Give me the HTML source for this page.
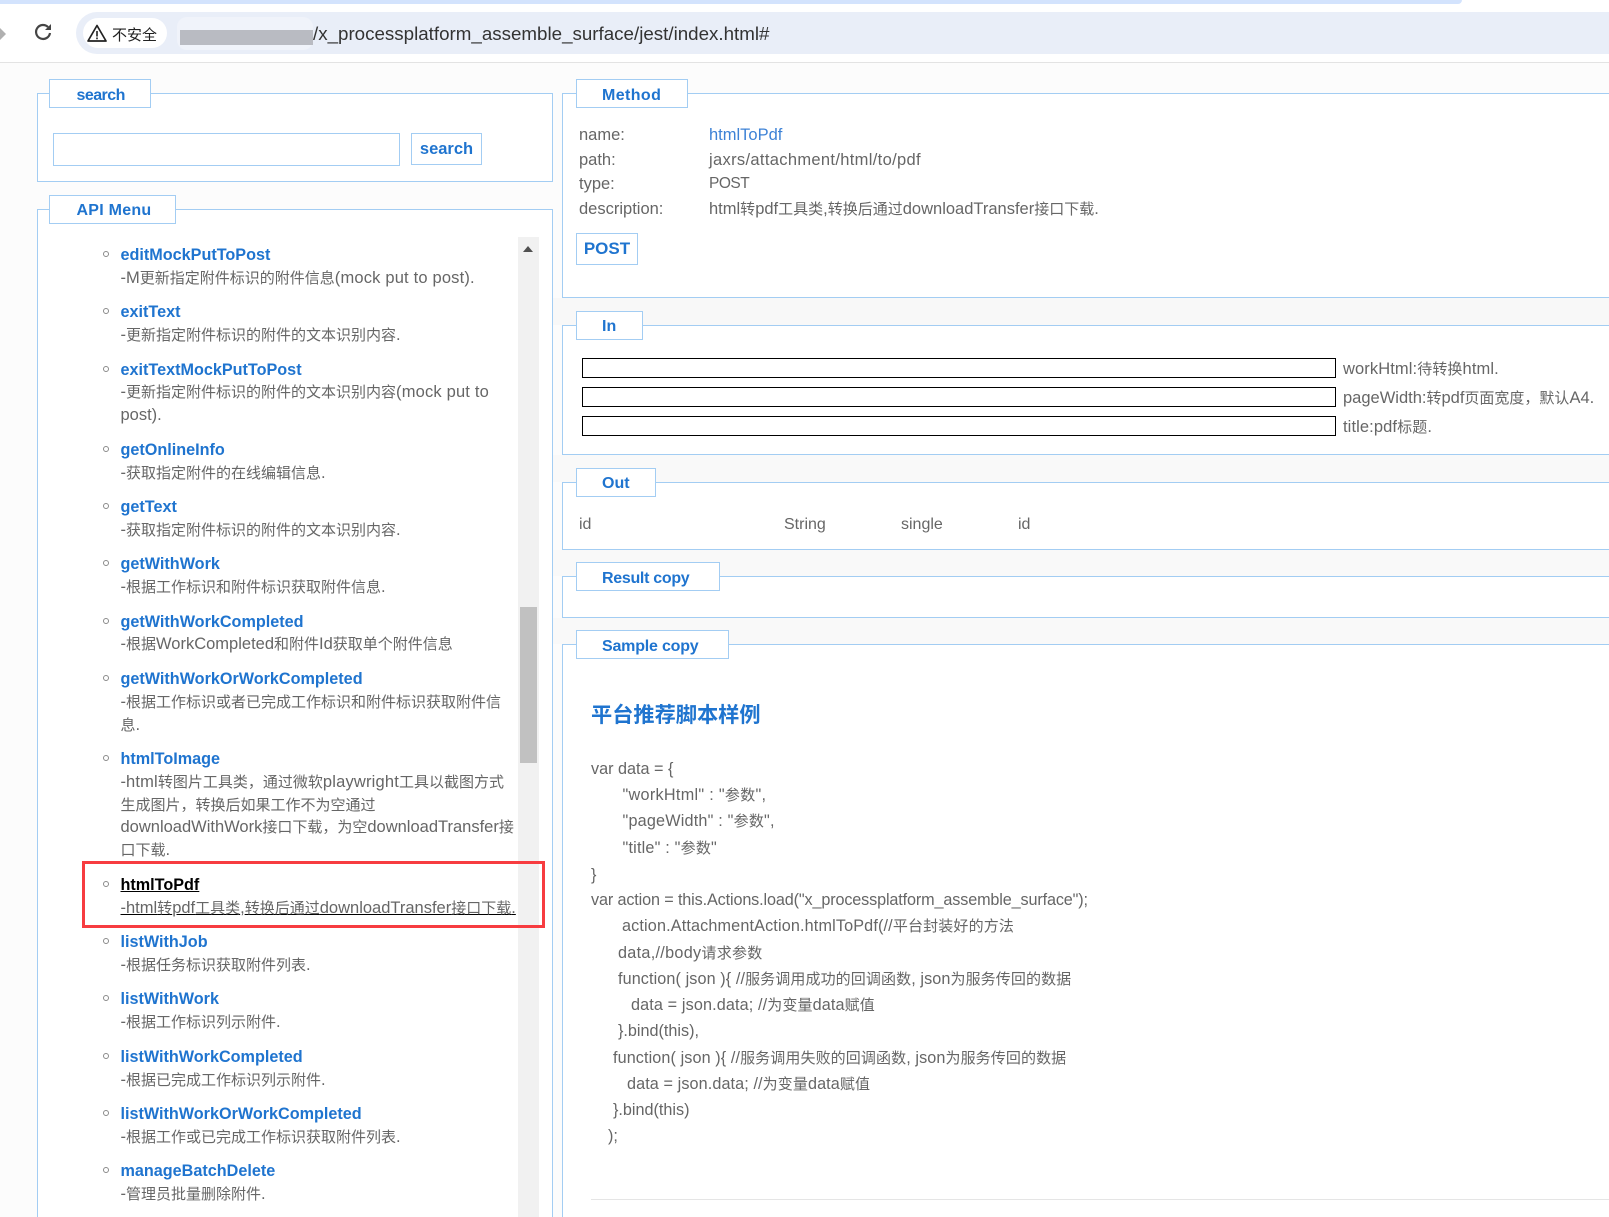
<!DOCTYPE html>
<html><head><meta charset="utf-8">
<style>
html,body{margin:0;padding:0;width:1609px;height:1217px;overflow:hidden;background:#fff}
body{position:relative;font-family:"Liberation Sans","Noto Sans CJK SC",sans-serif;font-size:16.5px;color:#666}
.a{position:absolute;box-sizing:border-box}
.t{position:absolute;white-space:nowrap;line-height:20px;height:20px}
i{font-style:normal;font-size:15px;line-height:0;font-family:"Noto Sans CJK SC",sans-serif}
u{text-decoration:none;letter-spacing:.18px}
.fs{position:absolute;box-sizing:border-box;border:1px solid #a3cdf3;background:#fff}
.lg{position:absolute;box-sizing:border-box;border:1px solid #a3cdf3;background:#fff;color:#1f74cf;font-weight:bold;font-size:16px;line-height:31px;padding-left:25px;white-space:nowrap}
.inp{position:absolute;box-sizing:border-box;left:582px;width:754px;height:20px;border:1px solid #000;background:#fff}
.btn{position:absolute;box-sizing:border-box;border:1px solid #a3cdf3;background:#fff;color:#1f74cf;font-weight:bold;font-size:17px;text-align:center;white-space:nowrap}
ul{position:absolute;left:120.5px;top:244px;width:400px;margin:0;padding:0;list-style:none}
li{position:relative;line-height:22.8px;margin-bottom:11.72px;white-space:nowrap;font-size:16.5px;color:#666}
li b{color:#1f74cf;display:block;font-size:16.2px}
li:before{content:"";position:absolute;left:-17.5px;top:7px;width:6px;height:6px;box-sizing:border-box;border:1.3px solid #8a8a8a;border-radius:50%}
li.s b{color:#000;text-decoration:underline}
li.s span{text-decoration:underline;text-decoration-color:#000}
.c{font-size:16.2px;color:#666}
</style></head><body>
<!-- browser chrome -->
<div class="a" style="left:0;top:0;width:1462px;height:4px;background:#d3e3fd;border-radius:0 0 8px 0"></div>
<div class="a" style="left:76px;top:12px;width:1533px;height:42px;background:#e9eef8;border-radius:21px 0 0 21px"></div>
<div class="a" style="left:83px;top:18px;width:84px;height:30px;background:#fff;border-radius:15px"></div>
<div class="a" style="left:177px;top:17px;width:136px;height:33px;background:#f0f3fa;border-radius:10px"></div>
<div class="a" style="left:180px;top:30px;width:133px;height:15px;background:#b9bbc2"></div>
<div class="a" style="left:0;top:62px;width:1609px;height:1px;background:#e3e3e3"></div>
<svg class="a" style="left:0;top:26px" width="8" height="16" viewBox="0 0 8 16"><path d="M0 2L6 8L0 14" fill="#b0b0b0"/></svg>
<svg class="a" style="left:34px;top:22px" width="20" height="20" viewBox="0 0 20 20"><path d="M16 11a7 7 0 1 1-2-6" fill="none" stroke="#454545" stroke-width="2.2"/><path d="M17 2v6h-6z" fill="#454545"/></svg>
<svg class="a" style="left:87px;top:24px" width="20" height="18" viewBox="0 0 20 18"><path d="M10 1.5L19 17H1z" fill="none" stroke="#222" stroke-width="1.7" stroke-linejoin="round"/><path d="M10 7v5.5M10 13.5v1.7" stroke="#222" stroke-width="1.6"/></svg>
<div class="t" style="left:112px;top:25px;font-size:15px;color:#222;font-family:'Noto Sans CJK SC',sans-serif">不安全</div>
<div class="t" style="left:313px;top:24px;font-size:18.75px;color:#333">/x_processplatform_assemble_surface/jest/index.html#</div>

<div class="a" style="left:0;top:63px;width:1609px;height:1154px;background:#fcfcfc"></div>
<div class="a" style="left:553px;top:298px;width:1056px;height:27px;background:#f8f8f8"></div>
<div class="a" style="left:553px;top:455px;width:1056px;height:27px;background:#f9f9f9"></div>
<div class="a" style="left:553px;top:550px;width:1056px;height:26px;background:#f9f9f9"></div>
<div class="a" style="left:553px;top:618px;width:1056px;height:26px;background:#f9f9f9"></div>

<!-- left: search -->
<div class="fs" style="left:37px;top:93px;width:516px;height:89px"></div>
<div class="lg" style="left:49px;top:79px;width:102px;height:29px;padding-left:26.5px;letter-spacing:-.55px">search</div>
<div class="a" style="left:53px;top:133px;width:347px;height:33px;border:1px solid #a3cdf3;background:#fff"></div>
<div class="btn" style="left:411px;top:133px;width:71px;height:32px;line-height:31px;font-size:16.5px">search</div>

<!-- left: API menu -->
<div class="fs" style="left:37px;top:209px;width:516px;height:1030px"></div>
<div class="lg" style="left:49px;top:195px;width:127px;height:29px;padding-left:26.5px;letter-spacing:.25px;line-height:29px">API Menu</div>
<ul>
<li><b>editMockPutToPost</b><span>-M<i>更新指定附件标识的附件信息</i><u>(mock put to post).</u></span></li>
<li><b>exitText</b><span>-<i>更新指定附件标识的附件的文本识别内容</i>.</span></li>
<li><b>exitTextMockPutToPost</b><span>-<i>更新指定附件标识的附件的文本识别内容</i><u>(mock put to</u><br>post).</span></li>
<li><b>getOnlineInfo</b><span>-<i>获取指定附件的在线编辑信息</i>.</span></li>
<li><b>getText</b><span>-<i>获取指定附件标识的附件的文本识别内容</i>.</span></li>
<li><b>getWithWork</b><span>-<i>根据工作标识和附件标识获取附件信息</i>.</span></li>
<li><b>getWithWorkCompleted</b><span>-<i>根据</i>WorkCompleted<i>和附件</i>Id<i>获取单个附件信息</i></span></li>
<li><b>getWithWorkOrWorkCompleted</b><span>-<i>根据工作标识或者已完成工作标识和附件标识获取附件信</i><br><i>息</i>.</span></li>
<li><b>htmlToImage</b><span>-<u>html</u><i>转图片工具类，通过微软</i><u>playwright</u><i>工具以截图方式</i><br><i>生成图片，转换后如果工作不为空通过</i><br>downloadWithWork<i>接口下载，为空</i>downloadTransfer<i>接</i><br><i>口下载</i>.</span></li>
<li class="s"><b>htmlToPdf</b><span>-html<i>转</i>pdf<i>工具类</i>,<i>转换后通过</i>downloadTransfer<i>接口下载</i>.</span></li>
<li><b>listWithJob</b><span>-<i>根据任务标识获取附件列表</i>.</span></li>
<li><b>listWithWork</b><span>-<i>根据工作标识列示附件</i>.</span></li>
<li><b>listWithWorkCompleted</b><span>-<i>根据已完成工作标识列示附件</i>.</span></li>
<li><b>listWithWorkOrWorkCompleted</b><span>-<i>根据工作或已完成工作标识获取附件列表</i>.</span></li>
<li><b>manageBatchDelete</b><span>-<i>管理员批量删除附件</i>.</span></li>
</ul>
<div class="a" style="left:518px;top:237px;width:21px;height:980px;background:#f1f1f1"></div>
<div class="a" style="left:520px;top:607px;width:17px;height:156px;background:#c1c1c1"></div>
<svg class="a" style="left:523px;top:246px" width="10" height="6" viewBox="0 0 10 6"><path d="M5 0L10 6H0z" fill="#505050"/></svg>
<div class="a" style="left:82px;top:861px;width:463px;height:67px;border:3px solid #f73c40"></div>

<!-- right: Method -->
<div class="fs" style="left:562px;top:93px;width:1060px;height:205px"></div>
<div class="lg" style="left:576px;top:79px;width:112px;height:29px;letter-spacing:.4px">Method</div>
<div class="t" style="left:579px;top:125px">name:</div><div class="t" style="left:709px;top:125px;color:#3d82d6">htmlToPdf</div>
<div class="t" style="left:579px;top:150px">path:</div><div class="t" style="left:709px;top:150px;letter-spacing:.33px">jaxrs/attachment/html/to/pdf</div>
<div class="t" style="left:579px;top:174px">type:</div><div class="t" style="left:709px;top:174px;font-size:15.5px;letter-spacing:-.5px">POST</div>
<div class="t" style="left:579px;top:199px">description:</div><div class="t" style="left:709px;top:199px">html<i>转</i>pdf<i>工具类</i>,<i>转换后通过</i>downloadTransfer<i>接口下载</i>.</div>
<div class="btn" style="left:576px;top:233px;width:62px;height:32px;line-height:29px">POST</div>

<!-- In -->
<div class="fs" style="left:562px;top:325px;width:1060px;height:130px"></div>
<div class="lg" style="left:576px;top:311px;width:67px;height:29px;line-height:29px">In</div>
<div class="inp" style="top:358px"></div><div class="t" style="left:1343px;top:359px;letter-spacing:.1px">workHtml:<i>待转换</i>html.</div>
<div class="inp" style="top:387px"></div><div class="t" style="left:1343px;top:388px">pageWidth:<i>转</i>pdf<i>页面宽度，默认</i>A4.</div>
<div class="inp" style="top:416px"></div><div class="t" style="left:1343px;top:417px;letter-spacing:.1px">title:pdf<i>标题</i>.</div>

<!-- Out -->
<div class="fs" style="left:562px;top:482px;width:1060px;height:68px"></div>
<div class="lg" style="left:576px;top:468px;width:80px;height:29px;line-height:29px">Out</div>
<div class="t" style="left:579px;top:515px;font-size:16px">id</div><div class="t" style="left:784px;top:515px;font-size:16px">String</div><div class="t" style="left:901px;top:515px;font-size:16px">single</div><div class="t" style="left:1018px;top:515px;font-size:16px">id</div>

<!-- Result -->
<div class="fs" style="left:562px;top:576px;width:1060px;height:42px"></div>
<div class="lg" style="left:576px;top:562px;width:144px;height:29px;letter-spacing:-.3px">Result copy</div>

<!-- Sample -->
<div class="fs" style="left:562px;top:644px;width:1060px;height:600px"></div>
<div class="lg" style="left:576px;top:630px;width:153px;height:29px;letter-spacing:-.2px">Sample copy</div>
<div class="t" style="left:591px;top:704px;font-size:21.2px;font-weight:bold;color:#1f74cf;font-family:'Noto Sans CJK SC',sans-serif">平台推荐脚本样例</div>
<div class="t c" style="left:591px;top:759px">var data = {</div>
<div class="t c" style="left:622.5px;top:785px;letter-spacing:.3px">"workHtml" : "<i>参数</i>",</div>
<div class="t c" style="left:622.5px;top:811px;letter-spacing:.2px">"pageWidth" : "<i>参数</i>",</div>
<div class="t c" style="left:622.5px;top:838px;letter-spacing:.2px">"title" : "<i>参数</i>"</div>
<div class="t c" style="left:591px;top:865px">}</div>
<div class="t c" style="left:591px;top:890px;letter-spacing:-.13px">var action = this.Actions.load("x_processplatform_assemble_surface");</div>
<div class="t c" style="left:622px;top:916px;letter-spacing:.15px">action.AttachmentAction.htmlToPdf(//<i>平台封装好的方法</i></div>
<div class="t c" style="left:618px;top:943px;letter-spacing:.3px">data,//body<i>请求参数</i></div>
<div class="t c" style="left:618px;top:969px;letter-spacing:.1px">function( json ){ //<i>服务调用成功的回调函数</i>, json<i>为服务传回的数据</i></div>
<div class="t c" style="left:631px;top:995px;letter-spacing:.13px">data = json.data; //<i>为变量</i>data<i>赋值</i></div>
<div class="t c" style="left:618px;top:1021px">}.bind(this),</div>
<div class="t c" style="left:613px;top:1048px;letter-spacing:.1px">function( json ){ //<i>服务调用失败的回调函数</i>, json<i>为服务传回的数据</i></div>
<div class="t c" style="left:627px;top:1074px;letter-spacing:.1px">data = json.data; //<i>为变量</i>data<i>赋值</i></div>
<div class="t c" style="left:613px;top:1100px">}.bind(this)</div>
<div class="t c" style="left:608px;top:1126px">);</div>
<div class="a" style="left:591px;top:1199px;width:1018px;height:1px;background:#e5e5e5"></div>
</body></html>
